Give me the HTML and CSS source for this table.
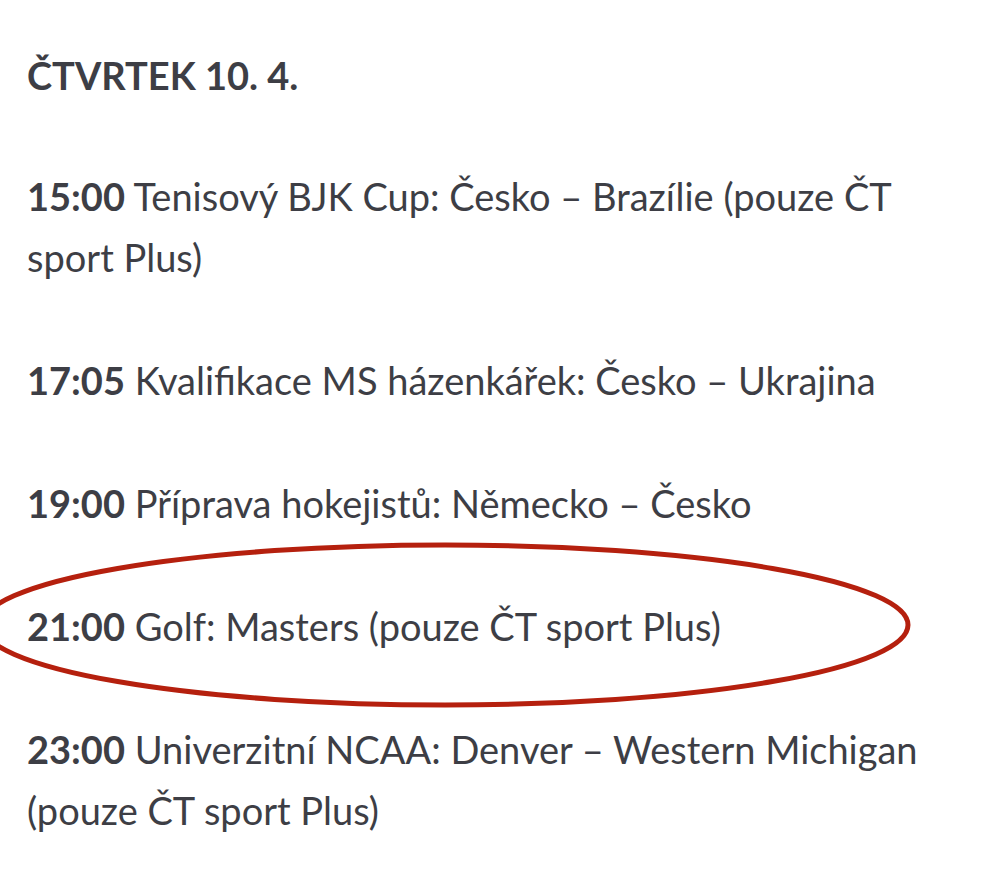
FILE: index.html
```html
<!DOCTYPE html>
<html lang="cs">
<head>
  <meta charset="UTF-8">
  <meta name="viewport" content="width=device-width, initial-scale=1.0">
  <title>Program ČT sport</title>
  <link rel="stylesheet" href="styles.css">
</head>
<body>

<div id="program">
  <h3 class="day">Čtvrtek 10. 4.</h3>
  <p class="item"><strong>15:00</strong> Tenisový BJK Cup: Česko – Brazílie (pouze ČT sport Plus)</p>
  <p class="item"><strong>17:05</strong> Kvalifikace MS házenkářek: Česko – Ukrajina</p>
  <p class="item"><strong>19:00</strong> Příprava hokejistů: Německo – Česko</p>
  <p class="item marked">
    <strong>21:00</strong> Golf: Masters (pouze ČT sport Plus)
    <svg class="circle" width="1000" height="170" viewBox="0 0 1000 170">
      <ellipse cx="445" cy="84" rx="463" ry="80" fill="none" stroke="#b5200e" stroke-width="5"/>
    </svg>
  </p>
  <p class="item"><strong>23:00</strong> Univerzitní NCAA: Denver – Western Michigan (pouze ČT sport Plus)</p>
</div>

</body>
</html>
```

FILE: styles.css
```css
body {
  font-family: Lato, "Open Sans", sans-serif;
  background-color: #fff;
  color: #3d3e45;
  margin: 0;
  padding: 0;
}
#program {
  padding: 45px 60px 0 27px;
  font-size: 38px;
  line-height: 61px;
}
.day {
  font-size: 38px;
  font-weight: bold;
  text-transform: uppercase;
  margin: 0 0 60px 0;
}
.item {
  margin: 0 0 62px 0;
}
.item strong {
  font-weight: bold;
}
/* zakrouzkovany porad */
.marked {
  position: relative;
}
.circle {
  position: absolute;
  left: -27px;
  top: -55px;
  pointer-events: none;
}
```
